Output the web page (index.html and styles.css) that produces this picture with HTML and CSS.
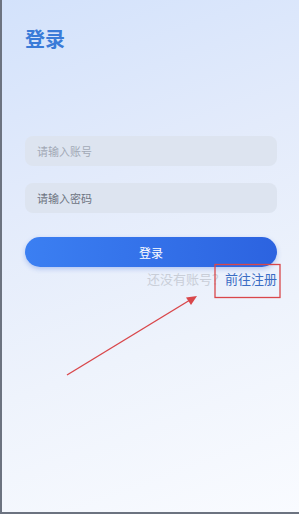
FILE: index.html
```html
<!DOCTYPE html>
<html>
	<head>
		<meta charset="UTF-8">
		<title>登录</title>
		<link rel="stylesheet" href="styles.css">
	</head>
	<body>
		<div class="page">
			<h1 class="title">登录</h1>
			<div class="form">
				<div class="field"><span class="hint">请输入账号</span></div>
				<div class="field"><span class="hint dark">请输入密码</span></div>
				<div class="btn">登录</div>
				<div class="reg">
					<span class="ask">还没有账号？</span><span class="go">前往注册</span>
				</div>
			</div>
			<!-- 标注 -->
			<svg class="mark" width="299" height="514" viewBox="0 0 299 514">
				<rect x="215" y="264.5" width="65" height="33" fill="none" stroke="#d9474b" stroke-width="1.3"/>
				<line x1="67" y1="375" x2="190" y2="300" stroke="#d9474b" stroke-width="1.4"/>
				<polygon points="197,296 186,297.5 191,305" fill="#d9474b"/>
			</svg>
		</div>
	</body>
</html>
```
FILE: styles.css
```css
	body{
		margin: 0;
		font-family: "Noto Sans CJK SC", "Noto Sans", sans-serif;
	}
	.page{
		position: relative;
		box-sizing: border-box;
		width: 299px;
		height: 514px;
		border-left: 2px solid #6c7380;
		border-bottom: 2px solid #6c7380;
		padding: 27px 22px 0 23px;
		background: linear-gradient(160deg, #d3e2fb 0%, #e3ebfb 35%, #eef3fc 65%, #f9fbff 100%);
	}
	.title{
		margin: 0;
		font-size: 20px;
		line-height: 24px;
		font-weight: bold;
		color: #3a7bd8;
	}
	.form{
		margin-top: 85px;
		display: flex;
		flex-direction: column;
	}
	.field{
		height: 30px;
		border-radius: 8px;
		background: #dde4f0;
		display: flex;
		align-items: center;
		padding: 0 12px;
		margin-bottom: 17px;
	}
	.hint{
		font-size: 11px;
		color: #a2a9b6;
	}
	.hint.dark{
		color: #6d7482;
	}
	.btn{
		margin-top: 7px;
		height: 30px;
		border-radius: 15px;
		background: linear-gradient(90deg, #3b7ff2, #2c63e0);
		box-shadow: 0 2px 5px rgba(50, 100, 220, 0.3);
		color: #fff;
		font-size: 12px;
		display: flex;
		align-items: center;
		justify-content: center;
	}
	.reg{
		margin-top: 4px;
		display: flex;
		justify-content: flex-end;
		font-size: 13px;
		line-height: 16px;
	}
	.ask{
		color: #c9ced8;
	}
	.go{
		color: #3a6cc4;
	}
	.mark{
		position: absolute;
		left: -2px;
		top: 0;
		pointer-events: none;
	}
```
